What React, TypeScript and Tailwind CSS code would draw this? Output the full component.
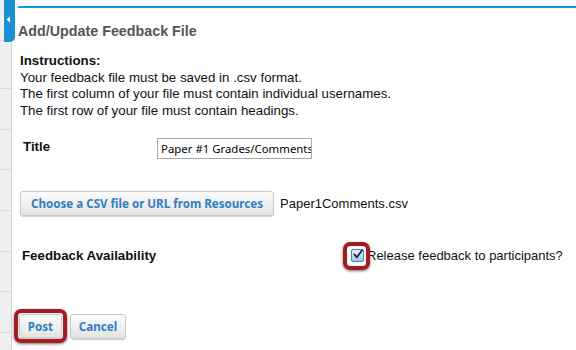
import React from "react";

const railRows = [41, 48, 41, 40, 41, 41, 40, 41, 30];

function RedFrame({ className }: { className: string }) {
  return (
    <span
      className={
        "pointer-events-none absolute border-[4px] border-[#a11d22] rounded-[7px] shadow-[0_1px_3px_rgba(0,0,0,0.55),inset_0_0_1px_rgba(0,0,0,0.4)] " +
        className
      }
    />
  );
}

export default function App() {
  const btn =
    "rounded-[3px] border border-[#c9c9c9] bg-gradient-to-b from-[#fbfbfb] to-[#e4e4e4] shadow-[0_1px_1px_rgba(0,0,0,0.18)] text-[#2f7fc1] font-bold text-[11.6px] leading-none whitespace-nowrap [font-family:'Noto_Sans',sans-serif]";
  return (
    <div
      className="flex w-[576px] h-[350px] overflow-hidden bg-white text-[#111] text-[13.3px]"
      style={{ fontFamily: "'Liberation Sans', Arial, sans-serif" }}
    >
      {/* left rail */}
      <div className="relative w-[12px] shrink-0 bg-[#efefef] border-r border-[#d6d6d6] flex flex-col">
        {railRows.map((h, i) => (
          <div
            key={i}
            className="shrink-0 border-b border-[#dadada]"
            style={{ height: h }}
          />
        ))}
        <div className="absolute left-[4px] top-0 w-[11px] h-[42px] bg-[#1a8fd2] rounded-br-[5px] flex items-start">
          <svg width="5" height="7" viewBox="0 0 5 7" className="mt-[16px] ml-[2px]">
            <path d="M4 0.5 L0.5 3.5 L4 6.5 Z" fill="#fff" />
          </svg>
        </div>
      </div>

      {/* main */}
      <div className="flex-1 flex flex-col">
        <div className="mt-[6px] ml-[6px] h-[2px] bg-[#129bd8]" />
        <h2 className="mt-[15px] ml-[6px] text-[14.3px] leading-[16px] font-bold text-[#555]">
          Add/Update Feedback File
        </h2>
        <div className="mt-[14px] ml-[8px] leading-[16.7px]">
          <div className="font-bold">Instructions:</div>
          <div>Your feedback file must be saved in .csv format.</div>
          <div>The first column of your file must contain individual usernames.</div>
          <div>The first row of your file must contain headings.</div>
        </div>

        {/* Title */}
        <div className="mt-[18px] ml-[11px] flex items-start">
          <div className="w-[134px] font-bold mt-[1px] leading-[16px]">Title</div>
          <div className="w-[155px] h-[21px] border border-[#a9a9a9] bg-white overflow-hidden flex items-center pl-[3px] whitespace-nowrap text-[11.4px] text-black [font-family:'Noto_Sans',sans-serif]">
            Paper #1 Grades/Comments
          </div>
        </div>

        {/* Choose */}
        <div className="mt-[32px] ml-[8px] flex items-center">
          <button className={btn + " h-[25px] px-[10px]"}>
            Choose a CSV file or URL from Resources
          </button>
          <span className="ml-[6px] text-[13px]">Paper1Comments.csv</span>
        </div>

        {/* Feedback availability */}
        <div className="mt-[26px] ml-[10px] flex items-center h-[28px]">
          <div className="w-[329px] font-bold">Feedback Availability</div>
          <div className="relative w-[13px] h-[13px] rounded-[2px] border border-[#5a7ea8] bg-gradient-to-b from-[#e3eefa] to-[#a8c7ea] flex items-center justify-center">
            <svg width="11" height="11" viewBox="0 0 11 11" className="-mt-[2px] ml-[1px]">
              <path d="M1.5 5.5 L4.3 8.6 L10 0.8" fill="none" stroke="#16254a" strokeWidth="2" strokeLinecap="round" strokeLinejoin="round" />
            </svg>
            <RedFrame className="-left-[9px] -top-[8px] w-[27px] h-[28px]" />
          </div>
          <span className="ml-[3px] text-[13px]">Release feedback to participants?</span>
        </div>

        {/* buttons */}
        <div className="mt-[44px] ml-[7px] flex items-center gap-[8px]">
          <div className="relative">
            <button className={btn + " h-[24px] w-[43px]"}>Post</button>
            <RedFrame className="-left-[5px] -top-[5px] -right-[5px] -bottom-[5px]" />
          </div>
          <button className={btn + " h-[25px] w-[56px]"}>Cancel</button>
        </div>
      </div>
    </div>
  );
}
